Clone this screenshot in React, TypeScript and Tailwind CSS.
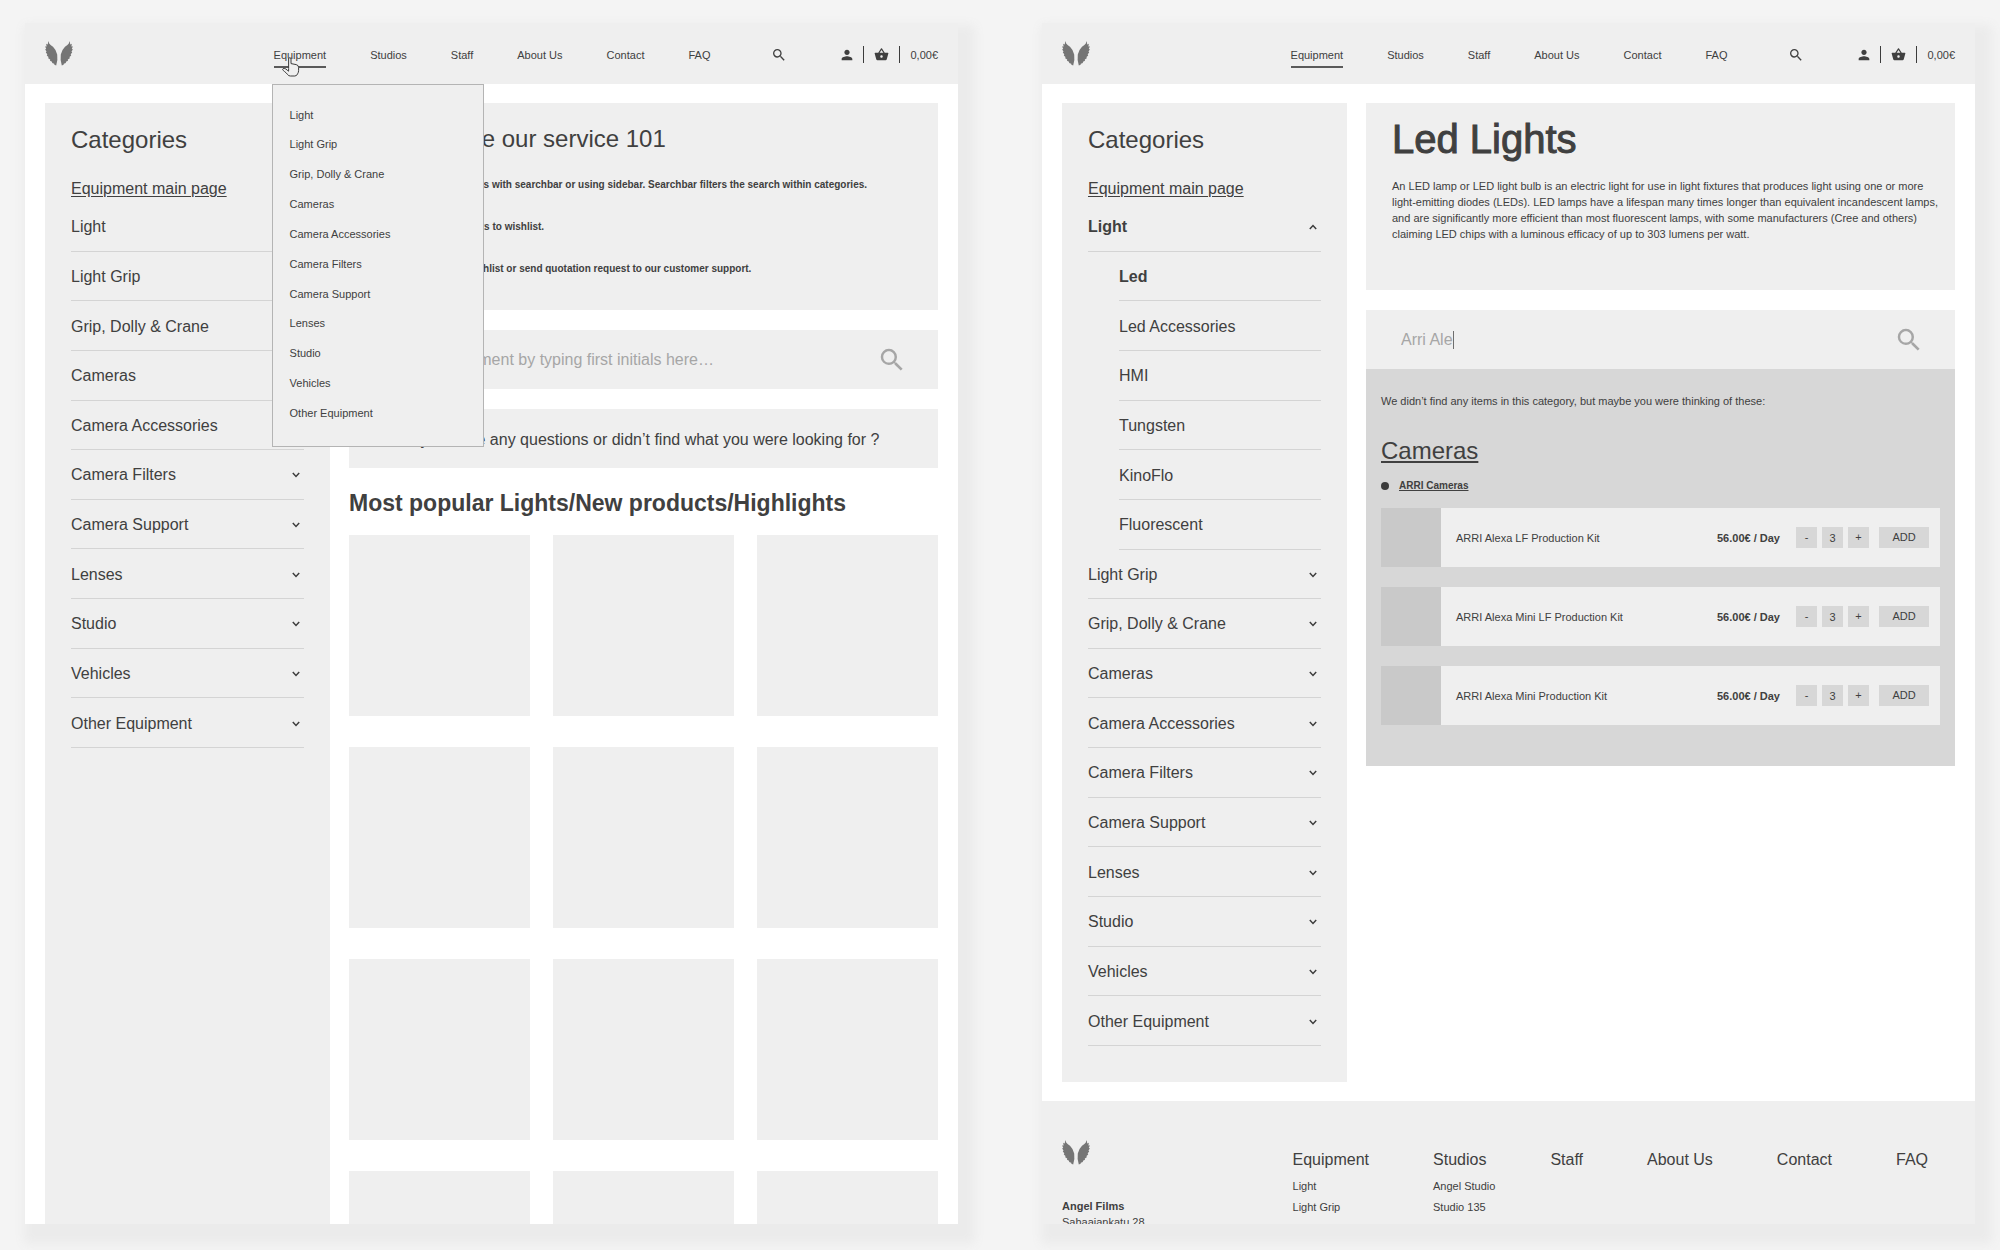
import React from "react";
import { MdPerson, MdSearch, MdShoppingBasket } from "react-icons/md";

const categories = [
  "Light",
  "Light Grip",
  "Grip, Dolly & Crane",
  "Cameras",
  "Camera Accessories",
  "Camera Filters",
  "Camera Support",
  "Lenses",
  "Studio",
  "Vehicles",
  "Other Equipment",
];

const lightTypes = ["Led", "Led Accessories", "HMI", "Tungsten", "KinoFlo", "Fluorescent"];

const kits = ["ARRI Alexa LF Production Kit", "ARRI Alexa Mini LF Production Kit", "ARRI Alexa Mini Production Kit"];

const footerColumns = [
  { title: "Equipment", links: ["Light", "Light Grip"] },
  { title: "Studios", links: ["Angel Studio", "Studio 135"] },
  { title: "Staff", links: [] },
  { title: "About Us", links: [] },
  { title: "Contact", links: [] },
  { title: "FAQ", links: [] },
];

function WingsLogo() {
  const wing =
    "M3.2 0 L4.2 2.6 L5.6 4 L8 5.8 Q11.2 9 12.2 13.4 Q13 18.6 11.2 24.6 L9.4 23.8 L9.2 22.8 L7.2 22 L7 20.8 L5 19.8 L5.2 18.6 L3.2 17.2 L3.5 16 L1.8 14.4 L2.3 13.2 L0.8 11.4 L1.5 10.4 L0.2 8.4 L1.2 7.6 L0 5.4 L1.6 5.4 L1.2 2.8 L2.8 3.4 Z";
  return (
    <svg viewBox="0 0 28 25" className="h-[25px] w-7" fill="#757575" aria-hidden="true">
      <path d={wing} />
      <path d={wing} transform="translate(28 0) scale(-1 1)" />
    </svg>
  );
}

function Chevron({ up = false }: { up?: boolean }) {
  return (
    <svg viewBox="0 0 8 6" className="mr-1 h-1.5 w-2" fill="none" stroke="#3c3c3c" strokeWidth="1.5" aria-hidden="true">
      <path d={up ? "M0.8 5 L4 1.6 L7.2 5" : "M0.8 1 L4 4.4 L7.2 1"} />
    </svg>
  );
}

function HandCursor() {
  return (
    <svg
      viewBox="0 0 18 20"
      className="pointer-events-none absolute left-2 top-2.5 z-20 h-5 w-[18px]"
      fill="#efefef"
      stroke="#3c3c3c"
      strokeWidth="1"
      strokeLinejoin="round"
      aria-hidden="true"
    >
      <path d="M6.6 11.5 V2 Q6.6 0.7 7.8 0.7 Q9 0.7 9 2 V6.6 L14.2 7.6 Q16.6 8.2 16.6 10.4 V13.4 Q16.6 15.4 15.6 16.8 Q14.8 19 12.8 19 H8.4 Q6.6 19 5.6 17.6 Q4.6 16 2.6 14.6 Q0.9 13.4 0.6 12.4 Q0.8 11.4 2.2 11.4 Q4 11.6 5.2 13.2 L6.6 14.2 Z" />
    </svg>
  );
}

function Header({ menuOpen = false }: { menuOpen?: boolean }) {
  return (
    <header className="flex h-[61px] shrink-0 items-center bg-[#efefef] px-5">
      <a href="#home" aria-label="Angel Films home">
        <WingsLogo />
      </a>
      <nav className="ml-auto flex self-stretch text-[11px]">
        <ul className="flex items-center gap-11">
          <li className="relative flex h-full items-center">
            <a href="#equipment" className="relative mt-2 border-b-2 border-[#5a5a5a] pb-[3px] leading-4">
              Equipment
              {menuOpen && <HandCursor />}
            </a>
            {menuOpen && (
              <ul className="absolute -left-0.5 top-full z-10 grid h-[363px] w-[212px] auto-rows-fr border border-[#b4b4b4] bg-[#efefef] px-[17px] pb-[18px] pt-[15px]">
                {categories.map((name) => (
                  <li key={name} className="flex items-center">
                    <a href="#category">{name}</a>
                  </li>
                ))}
              </ul>
            )}
          </li>
          {["Studios", "Staff", "About Us", "Contact", "FAQ"].map((name) => (
            <li key={name} className="pt-[3px]">
              <a href="#page">{name}</a>
            </li>
          ))}
        </ul>
        <button type="button" aria-label="Search" className="ml-[61px] pt-0.5">
          <MdSearch className="size-4" />
        </button>
        <div className="ml-[52px] flex items-center pt-0.5">
          <button type="button" aria-label="Account">
            <MdPerson className="size-4" />
          </button>
          <span className="ml-2 h-[17px] w-px bg-[#3c3c3c]" />
          <button type="button" aria-label="Basket" className="ml-2.5">
            <MdShoppingBasket className="size-[15px]" />
          </button>
          <span className="ml-2.5 h-[17px] w-px bg-[#3c3c3c]" />
          <span className="ml-2.5 pt-px">0,00€</span>
        </div>
      </nav>
    </header>
  );
}

function SidebarRow({ name, nested = false, bold = false, chevron }: { name: string; nested?: boolean; bold?: boolean; chevron?: "up" | "down" }) {
  return (
    <li className={nested ? "ml-[31px] border-b border-[#d4d4d4]" : "border-b border-[#d4d4d4]"}>
      <button
        type="button"
        className={
          bold ? "flex size-full items-center justify-between pt-0.5 font-bold" : "flex size-full items-center justify-between pt-0.5"
        }
      >
        {name}
        {chevron && <Chevron up={chevron === "up"} />}
      </button>
    </li>
  );
}

function Sidebar({ expanded = false }: { expanded?: boolean }) {
  const [first, ...rest] = categories;
  return (
    <aside className="w-[285px] shrink-0 bg-[#efefef] px-[26px] pb-9 pt-[21px]">
      <h2 className="text-2xl">Categories</h2>
      <a href="#equipment" className="mt-[21px] block text-base leading-6 underline underline-offset-2">
        Equipment main page
      </a>
      <ul className={expanded ? "mt-px grid h-[844px] auto-rows-fr" : "mt-px grid h-[546px] auto-rows-fr"}>
        <SidebarRow name={first} bold={expanded} chevron={expanded ? "up" : "down"} />
        {expanded && lightTypes.map((name) => <SidebarRow key={name} name={name} nested bold={name === "Led"} />)}
        {rest.map((name) => (
          <SidebarRow key={name} name={name} chevron="down" />
        ))}
      </ul>
    </aside>
  );
}

function Frame({ children }: { children: React.ReactNode }) {
  return (
    <div className="min-w-0 flex-1 shadow-[8px_11px_10px_9px_#ebebeb]">
      <div className="flex h-full flex-col overflow-hidden bg-white">{children}</div>
    </div>
  );
}

function EquipmentPage() {
  return (
    <Frame>
      <Header menuOpen />
      <div className="flex gap-[19px] px-5 pt-[19px]">
        <Sidebar />
        <main className="min-w-0 flex-1">
          <section className="h-[207px] bg-[#efefef] px-[26px] pt-5">
            <h1 className="text-2xl">How to use our service 101</h1>
            <ol className="mt-[22px] flex list-inside list-decimal flex-col gap-[26px] whitespace-nowrap pl-2 text-[10px] font-bold leading-4">
              <li>Search for products with searchbar or using sidebar. Searchbar filters the search within categories.</li>
              <li>Add found products to wishlist.</li>
              <li>Checkout your wishlist or send quotation request to our customer support.</li>
            </ol>
          </section>
          <form className="mt-5 flex h-[59px] items-center bg-[#efefef] pl-[35px] pr-[31px]">
            <input
              type="text"
              aria-label="Search equipment"
              placeholder="Search equipment by typing first initials here…"
              className="min-w-0 flex-1 bg-transparent text-base outline-none placeholder:text-[#a6a6a6]"
            />
            <button type="button" aria-label="Search" className="text-[#a6a6a6]">
              <MdSearch className="size-[30px]" />
            </button>
          </form>
          <p className="mt-5 flex h-[59px] items-center justify-center bg-[#efefef] pr-3 pt-0.5 text-base">
            Do you have any questions or didn’t find what you were looking for ?
          </p>
          <h2 className="mt-[19px] text-[23px] font-bold leading-8">Most popular Lights/New products/Highlights</h2>
          <div className="mt-4 grid grid-cols-3 gap-x-[23px] gap-y-[31px]">
            {Array.from({ length: 12 }, (_, i) => (
              <div key={i} className="aspect-square bg-[#efefef]" />
            ))}
          </div>
        </main>
      </div>
    </Frame>
  );
}

function KitRow({ name }: { name: string }) {
  const box = "h-[21px] w-[21px] bg-[#d7d7d7]";
  return (
    <li className="flex h-[59px] items-center bg-[#efefef] pr-[11px] text-[11px]">
      <div className="w-[60px] self-stretch bg-[#c9c9c9]" />
      <span className="ml-[15px] flex-1 pt-px">{name}</span>
      <span className="pt-px font-bold">56.00€ / Day</span>
      <button type="button" aria-label="Decrease" className={box + " ml-4"}>
        -
      </button>
      <input type="text" aria-label="Days" defaultValue="3" className={box + " ml-[5px] text-center"} />
      <button type="button" aria-label="Increase" className={box + " ml-[5px]"}>
        +
      </button>
      <button type="button" className="ml-2.5 h-[21px] w-[50px] bg-[#d7d7d7]">
        ADD
      </button>
    </li>
  );
}

function Footer() {
  return (
    <footer className="mt-[19px] flex justify-between bg-[#efefef] pb-10 pl-5 pr-[47px] pt-[39px] text-[11px]">
      <div>
        <WingsLogo />
        <address className="mt-[33px] not-italic leading-4">
          <strong className="block">Angel Films</strong>
          <span className="block">Sahaajankatu 28</span>
        </address>
      </div>
      <div className="flex gap-16 pt-2">
        {footerColumns.map((col) => (
          <div key={col.title} className="flex w-min flex-col whitespace-nowrap">
            <h3 className="text-base">{col.title}</h3>
            {col.links.length > 0 && (
              <ul className="mt-1 w-0">
                {col.links.map((link) => (
                  <li key={link} className="leading-[21px]">
                    <a href="#page">{link}</a>
                  </li>
                ))}
              </ul>
            )}
          </div>
        ))}
      </div>
    </footer>
  );
}

function LedLightsPage() {
  return (
    <Frame>
      <Header />
      <div className="flex gap-[19px] px-5 pt-[19px]">
        <Sidebar expanded />
        <main className="min-w-0 flex-1">
          <section className="h-[187px] bg-[#efefef] pl-[26px] pr-3 pt-3">
            <h1 className="text-[40px] leading-[48px] [-webkit-text-stroke:1px]">Led Lights</h1>
            <p className="mt-[15px] text-[11px] leading-4">
              An LED lamp or LED light bulb is an electric light for use in light fixtures that produces light using one or more
              <br />
              light-emitting diodes (LEDs). LED lamps have a lifespan many times longer than equivalent incandescent lamps,
              <br />
              and are significantly more efficient than most fluorescent lamps, with some manufacturers (Cree and others)
              <br />
              claiming LED chips with a luminous efficacy of up to 303 lumens per watt.
            </p>
          </section>
          <form className="mt-5 flex h-[59px] items-center bg-[#efefef] pl-[35px] pr-[31px] text-[#a6a6a6]">
            <input
              type="text"
              aria-label="Search equipment"
              defaultValue="Arri Ale"
              className="bg-transparent text-base outline-none [field-sizing:content]"
            />
            <span className="h-[18px] w-px bg-[#6e6e6e]" />
            <button type="button" aria-label="Search" className="ml-auto">
              <MdSearch className="size-[30px]" />
            </button>
          </form>
          <section className="bg-[#d7d7d7] px-[15px] pb-[41px] pt-6">
            <p className="text-[11px] leading-4">We didn’t find any items in this category, but maybe you were thinking of these:</p>
            <h2 className="mt-[26px] text-2xl">
              <a href="#cameras" className="underline underline-offset-2">
                Cameras
              </a>
            </h2>
            <p className="mt-[11px] flex items-center gap-2.5 text-[10px] leading-4">
              <span className="size-2 rounded-full bg-[#3c3c3c]" />
              <a href="#arri" className="font-bold underline">
                ARRI Cameras
              </a>
            </p>
            <ul className="mt-3.5 flex flex-col gap-5">
              {kits.map((name) => (
                <KitRow key={name} name={name} />
              ))}
            </ul>
          </section>
        </main>
      </div>
      <Footer />
    </Frame>
  );
}

export default function App() {
  return (
    <div className="flex h-screen gap-[84px] overflow-hidden bg-[#f4f4f4] px-[25px] pb-[26px] pt-[23px] font-['Liberation_Sans',Arial,sans-serif] text-[#404040]">
      <EquipmentPage />
      <LedLightsPage />
    </div>
  );
}
